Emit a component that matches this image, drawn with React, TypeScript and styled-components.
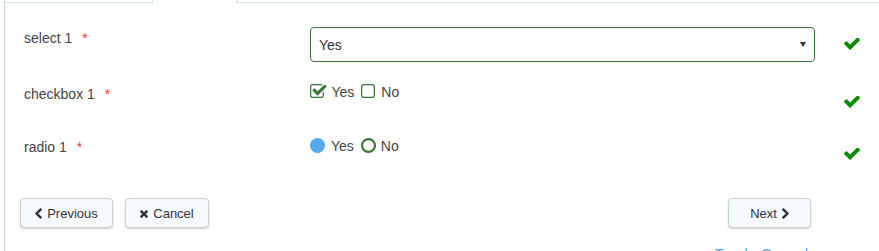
import React from "react";
import styled, { createGlobalStyle } from "styled-components";

const Global = createGlobalStyle`
  html, body { margin: 0; padding: 0; background: #fff; }
  body {
    font-family: "Liberation Sans", Arial, sans-serif;
    font-size: 14px;
    line-height: 16px;
    color: #444;
    overflow: hidden;
  }
`;

const Page = styled.div`
  padding-left: 4px;
  height: 251px;
  overflow: hidden;
`;

const Panel = styled.div`
  border-left: 1px solid #d4d4d4;
  min-height: 300px;
`;

const TabStrip = styled.div`
  display: flex;
  height: 3px;
`;

const Tab = styled.div<{ $active?: boolean; $grow?: boolean; $w?: number; $edge?: "left" | "right" }>`
  box-sizing: border-box;
  height: 3px;
  flex: ${(p) => (p.$grow ? "1 1 auto" : `0 0 ${p.$w}px`)};
  border-bottom: ${(p) => (p.$active ? "none" : "1px solid #cde5f2")};
  border-right: ${(p) => (p.$edge === "right" ? "1px solid #cde5f2" : "none")};
  border-left: ${(p) => (p.$edge === "left" ? "1px solid #cde5f2" : "none")};
`;

const Form = styled.div`
  padding: 24px 0 0 19px;
`;

const Row = styled.div<{ $mt: number }>`
  display: grid;
  grid-template-columns: 286px 505px 1fr;
  align-items: start;
  margin-top: ${(p) => p.$mt}px;
`;

const Label = styled.div<{ $mt: number }>`
  margin-top: ${(p) => p.$mt}px;
  color: #444;
`;

const Required = styled.span`
  color: #f33;
  margin-left: 10px;
`;

const SelectBox = styled.div`
  position: relative;
  box-sizing: border-box;
  height: 35px;
  border: 1px solid #3c763d;
  border-radius: 4px;
  display: flex;
  align-items: center;
  padding-left: 8px;
  color: #333;
  background: #fff;
`;

const Arrow = styled.span`
  position: absolute;
  right: 8px;
  top: 14px;
  width: 0;
  height: 0;
  border-left: 3px solid transparent;
  border-right: 3px solid transparent;
  border-top: 5px solid #333;
`;

const Options = styled.div`
  display: flex;
  align-items: flex-start;
`;

const Option = styled.div<{ $gap: number }>`
  display: flex;
  align-items: flex-start;
  margin-right: ${(p) => p.$gap}px;
`;

const OptText = styled.span<{ $mt: number; $ml: number }>`
  margin-top: ${(p) => p.$mt}px;
  margin-left: ${(p) => p.$ml}px;
  color: #444;
`;

const Icon = styled.svg`
  display: block;
  flex: none;
`;

const ValidCheck = styled.svg<{ $mt: number }>`
  display: block;
  margin-top: ${(p) => p.$mt}px;
  margin-left: 29px;
`;

const ButtonBar = styled.div`
  display: flex;
  justify-content: space-between;
  margin-top: 38px;
  padding: 0 68px 0 15px;
`;

const ButtonGroup = styled.div`
  display: flex;
  gap: 12px;
`;

const Button = styled.button<{ $w: number }>`
  box-sizing: border-box;
  width: ${(p) => p.$w}px;
  height: 30px;
  display: flex;
  align-items: center;
  justify-content: center;
  gap: 5px;
  background: #f5faff;
  border: 1px solid #cfcfcf;
  border-radius: 4px;
  box-shadow: 0 1px 2px rgba(0, 0, 0, 0.18);
  font-family: "Liberation Sans", Arial, sans-serif;
  font-size: 13px;
  color: #333;
  padding: 0;
  cursor: pointer;
`;

const Footer = styled.div`
  display: flex;
  justify-content: flex-end;
  margin-top: 18px;
  padding-right: 71px;
  gap: 9px;
  font-size: 14px;
  color: #5a9fe6;
`;

const FooterLink = styled.span`
  color: #5a9fe6;
`;

const CHECK_PATH =
  "M1671 566q0 40-28 68l-724 724-136 136q-28 28-68 28t-68-28l-136-136-362-362q-28-28-28-68t28-68l136-136q28-28 68-28t68 28l294 295 656-657q28-28 68-28t68 28l136 136q28 28 28 68z";

const Check = ({ mt }: { mt: number }) => (
  <ValidCheck $mt={mt} width="16" height="12" viewBox="121 402 1550 1124">
    <path d={CHECK_PATH} fill="#0a8a00" />
  </ValidCheck>
);

const CheckSquare = () => (
  <Icon width="16.5" height="14" viewBox="64 128 1664 1408">
    <path
      fill="#3c763d"
      d="M1472 930v318q0 119-84.5 203.5t-203.5 84.5h-832q-119 0-203.5-84.5t-84.5-203.5v-832q0-119 84.5-203.5t203.5-84.5h832q63 0 117 25 15 7 18 23 3 17-9 29l-49 49q-10 10-23 10-3 0-9-2-23-6-45-6h-832q-66 0-113 47t-47 113v832q0 66 47 113t113 47h832q66 0 113-47t47-113v-254q0-13 9-22l64-64q10-10 23-10 6 0 12 3 20 8 20 29zm231-489l-814 814q-24 24-57 24t-57-24l-430-430q-24-24-24-57t24-57l110-110q24-24 57-24t57 24l263 263 647-647q24-24 57-24t57 24l110 110q24 24 24 57t-24 57z"
    />
  </Icon>
);

const Square = () => (
  <Icon width="14" height="14" viewBox="0 128 1408 1408">
    <path
      fill="#3c763d"
      d="M1120 256h-832q-66 0-113 47t-47 113v832q0 66 47 113t113 47h832q66 0 113-47t47-113v-832q0-66-47-113t-113-47zm288 160v832q0 119-84.5 203.5t-203.5 84.5h-832q-119 0-203.5-84.5t-84.5-203.5v-832q0-119 84.5-203.5t203.5-84.5h832q119 0 203.5 84.5t84.5 203.5z"
    />
  </Icon>
);

const RadioOn = () => (
  <Icon width="15" height="15" viewBox="0 0 15 15">
    <circle cx="7.5" cy="7.5" r="7.5" fill="#55a8ee" />
  </Icon>
);

const RadioOff = () => (
  <Icon width="15" height="15" viewBox="0 128 1536 1536">
    <path
      fill="#3c763d"
      d="M768 352q-148 0-273 73t-198 198-73 273 73 273 198 198 273 73 273-73 198-198 73-273-73-273-198-198-273-73zm768 544q0 209-103 385.5t-279.5 279.5-385.5 103-385.5-103-279.5-279.5-103-385.5 103-385.5 279.5-279.5 385.5-103 385.5 103 279.5 279.5 103 385.5z"
    />
  </Icon>
);

const ChevronLeft = () => (
  <Icon width="7" height="11" viewBox="154 26 1036 1612">
    <path
      fill="#333"
      d="M1171 301l-531 531 531 531q19 19 19 45t-19 45l-166 166q-19 19-45 19t-45-19l-742-742q-19-19-19-45t19-45l742-742q19-19 45-19t45 19l166 166q19 19 19 45t-19 45z"
    />
  </Icon>
);

const ChevronRight = () => (
  <Icon width="7" height="11" viewBox="90 26 1036 1612">
    <path
      fill="#333"
      d="M1107 877l-742 742q-19 19-45 19t-45-19l-166-166q-19-19-19-45t19-45l531-531-531-531q-19-19-19-45t19-45l166-166q19-19 45-19t45 19l742 742q19 19 19 45t-19 45z"
    />
  </Icon>
);

const Times = () => (
  <Icon width="8" height="9" viewBox="110 228 1188 1326">
    <path
      fill="#333"
      d="M1298 1322q0 40-28 68l-136 136q-28 28-68 28t-68-28l-294-294-294 294q-28 28-68 28t-68-28l-136-136q-28-28-28-68t28-68l294-294-294-294q-28-28-28-68t28-68l136-136q28-28 68-28t68 28l294 294 294-294q28-28 68-28t68 28l136 136q28 28 28 68t-28 68l-294 294 294 294q28 28 28 68z"
    />
  </Icon>
);

export default function App() {
  return (
    <Page>
      <Global />
      <Panel>
        <TabStrip>
          <Tab $w={148} $edge="right" />
          <Tab $w={83} $active />
          <Tab $grow $edge="left" />
        </TabStrip>
        <Form>
          <Row $mt={0}>
            <Label $mt={3}>
              select 1<Required>*</Required>
            </Label>
            <SelectBox>
              Yes
              <Arrow />
            </SelectBox>
            <Check mt={11} />
          </Row>
          <Row $mt={22}>
            <Label $mt={2}>
              checkbox 1<Required>*</Required>
            </Label>
            <Options>
              <Option $gap={7}>
                <CheckSquare />
                <OptText $mt={0} $ml={5}>Yes</OptText>
              </Option>
              <Option $gap={0}>
                <Square />
                <OptText $mt={0} $ml={6}>No</OptText>
              </Option>
            </Options>
            <Check mt={12} />
          </Row>
          <Row $mt={30}>
            <Label $mt={1}>
              radio 1<Required>*</Required>
            </Label>
            <Options>
              <Option $gap={7}>
                <RadioOn />
                <OptText $mt={0} $ml={6}>Yes</OptText>
              </Option>
              <Option $gap={0}>
                <RadioOff />
                <OptText $mt={0} $ml={5}>No</OptText>
              </Option>
            </Options>
            <Check mt={10} />
          </Row>
        </Form>
        <ButtonBar>
          <ButtonGroup>
            <Button $w={93}>
              <ChevronLeft />
              <span>Previous</span>
            </Button>
            <Button $w={84}>
              <Times />
              <span>Cancel</span>
            </Button>
          </ButtonGroup>
          <Button $w={83}>
            <span>Next</span>
            <ChevronRight />
          </Button>
        </ButtonBar>
        <Footer>
          <FooterLink>Touch</FooterLink>
          <FooterLink>Ground</FooterLink>
        </Footer>
      </Panel>
    </Page>
  );
}
